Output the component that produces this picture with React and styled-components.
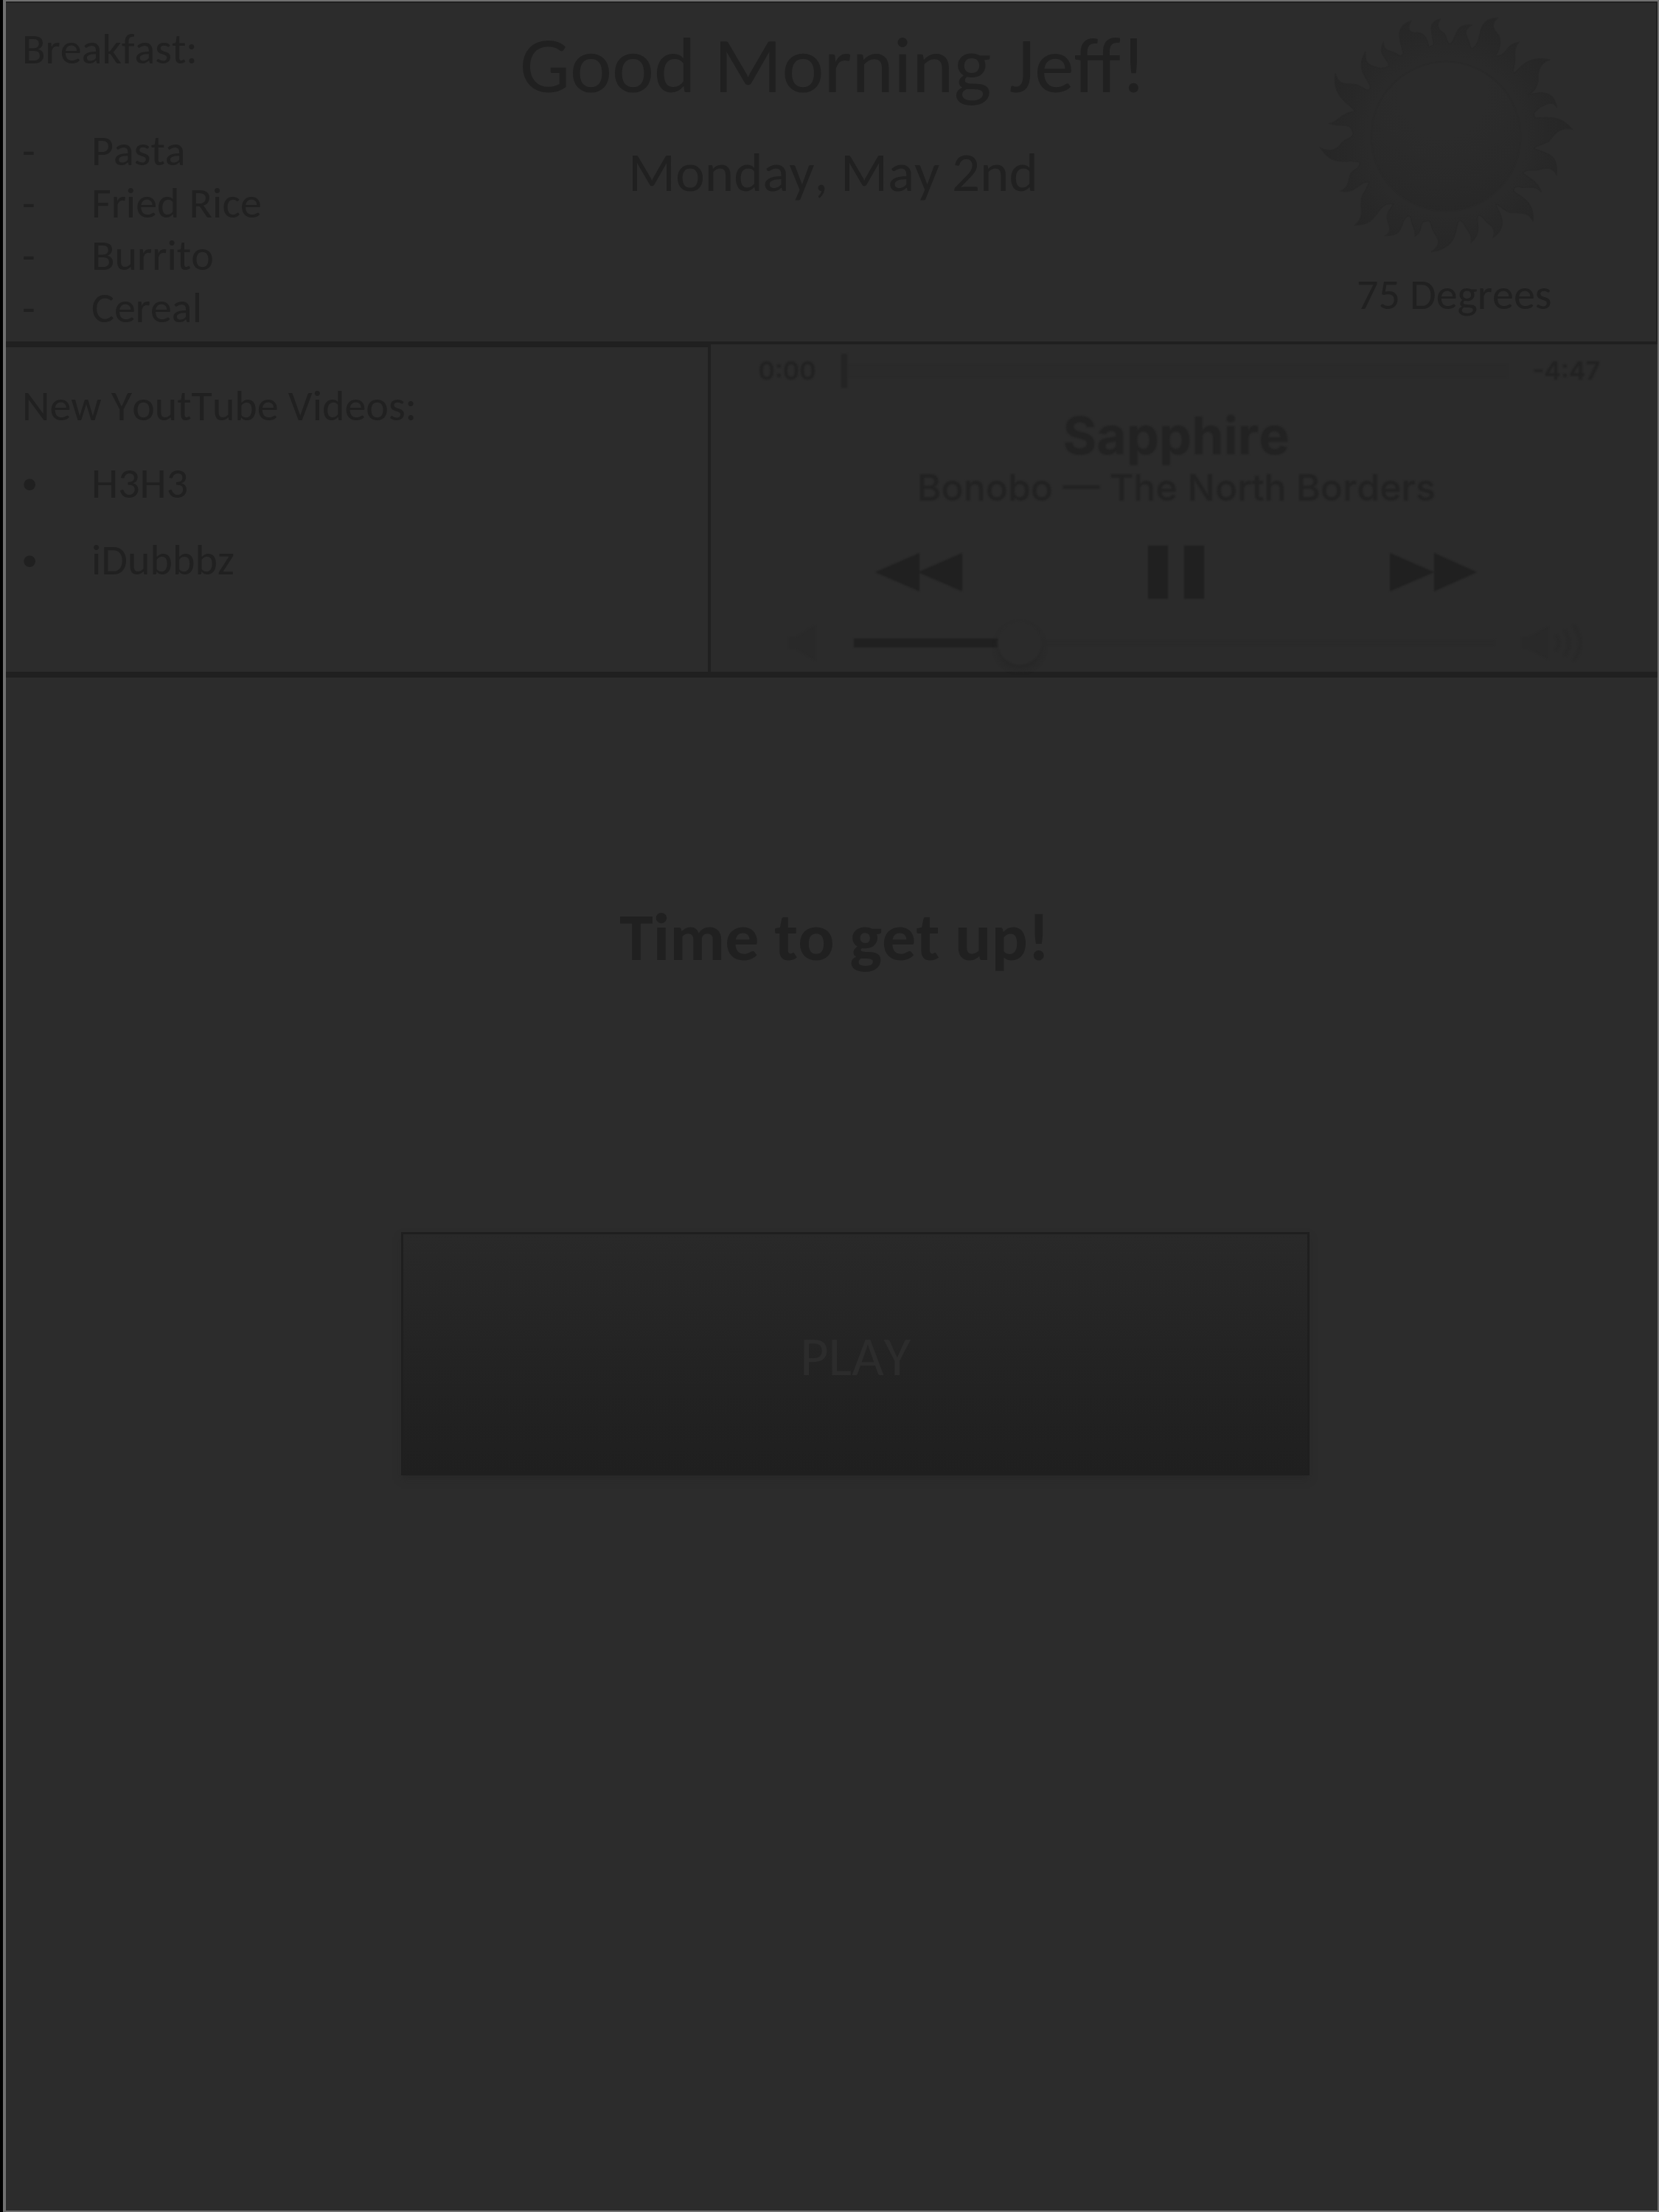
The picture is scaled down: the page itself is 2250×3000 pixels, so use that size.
import React, { useState } from "react";
import styled, { createGlobalStyle } from "styled-components";

const ink = "#202020";
const paper = "#2c2c2c";
const edge = "#707070";

const GlobalStyle = createGlobalStyle`
  *, *::before, *::after { box-sizing: border-box; }
  body { margin: 0; background: #000; }
  h1, h2, p, ul { margin: 0; padding: 0; font-weight: 400; }
`;

const Screen = styled.div`
  display: flex;
  flex-direction: column;
  min-height: 100vh;
  margin-left: 4px;
  border: 2px solid ${edge};
  border-left-width: 4px;
  background: ${paper};
  color: ${ink};
  font-family: Carlito, Calibri, "Open Sans", sans-serif;
  font-size: 58px;
  font-kerning: none;
  line-height: 70px;
`;

const Header = styled.header`
  display: grid;
  grid-template-columns: 1fr 2fr 1fr;
  border: 2px solid ${ink};
  border-width: 2px 2px 4px 0;
`;

const Breakfast = styled.section`
  display: flex;
  flex-direction: column;
  gap: 67px;
  padding: 28px 22px 10px;
`;

const List = styled.ul`
  list-style: none;
`;

const Item = styled.li`
  display: grid;
  grid-template-columns: 94px 1fr;
  line-height: ${(p) => (p.$loose ? "104px" : "71px")};
  white-space: nowrap;
`;

const Bullet = styled.span`
  font-family: "Liberation Sans", sans-serif;
`;

const Greeting = styled.div`
  display: flex;
  flex-direction: column;
  align-items: center;
  gap: 34px;
  padding: 20px 0 0 6px;
  white-space: nowrap;
`;

const Title = styled.h1`
  font-size: 108px;
  line-height: 128px;
`;

const DateLine = styled.p`
  font-size: 75px;
  line-height: 96px;
`;

const Weather = styled.section`
  display: flex;
  flex-direction: column;
  align-items: center;
  gap: 18px;
  padding: 16px 8px 0 0;

  svg { display: block; width: 350px; height: 327px; }
`;

const Degrees = styled.p`
  padding-left: 20px;
`;

const Middle = styled.div`
  display: grid;
  grid-template-columns: 42.7% 1fr;
  border-bottom: 8px solid ${ink};
`;

const Videos = styled.section`
  display: flex;
  flex-direction: column;
  gap: 18px;
  padding: 45px 22px;
  border: solid ${ink};
  border-width: 4px 4px 0 0;
`;

const VideosTitle = styled.h2`
  font-size: 58px;
  line-height: 70px;
`;

const Player = styled.section`
  display: flex;
  flex-direction: column;
  padding: 8px 78px 0 64px;
  background: #2b2b2b;
  color: #222222;
  font-family: Inter, "Liberation Sans", sans-serif;

  & > * { filter: blur(1px); }
`;

const SeekRow = styled.div`
  display: flex;
  align-items: center;
  gap: 34px;
  height: 56px;
  font-size: 34px;
  font-weight: 600;
  line-height: 40px;
`;

const Seek = styled.input`
  appearance: none;
  flex: 1;
  min-width: 0;
  height: 48px;
  margin: 0;
  background: linear-gradient(#2a2a2a, #2a2a2a) center / 100% 18px no-repeat;

  &::-webkit-slider-thumb {
    appearance: none;
    width: 8px;
    height: 46px;
    background: #242424;
  }
`;

const Track = styled.div`
  display: flex;
  flex-direction: column;
  align-items: center;
  padding: 20px 8px 0 0;
  white-space: nowrap;
`;

const Song = styled.h2`
  font-size: 70px;
  font-weight: 700;
  line-height: 80px;
`;

const Artist = styled.p`
  font-size: 50px;
  font-weight: 500;
  line-height: 60px;
`;

const Controls = styled.div`
  display: flex;
  justify-content: space-between;
  align-items: center;
  height: 80px;
  margin-top: 45px;
  padding: 0 167px 0 159px;
`;

const IconButton = styled.button`
  display: flex;
  padding: 0;
  border: 0;
  background: none;
  color: ${ink};
`;

const VolumeRow = styled.div`
  display: flex;
  align-items: center;
  gap: 36px;
  margin-top: 20px;
  padding: 0 18px 3px 42px;
  color: #292929;
`;

const Volume = styled.input`
  appearance: none;
  flex: 1;
  min-width: 0;
  height: 72px;
  margin: 0 0 0 16px;
  border-radius: 6px;
  background:
    linear-gradient(${ink}, ${ink}) left center / 23% 12px no-repeat,
    linear-gradient(#2a2a2a, #2a2a2a) center / 100% 8px no-repeat;

  &::-webkit-slider-thumb {
    appearance: none;
    width: 60px;
    height: 60px;
    border-radius: 50%;
    background: #2b2b2b;
    box-shadow: 0 6px 6px #272727;
  }
`;

const Alarm = styled.main`
  display: flex;
  flex: 1;
  flex-direction: column;
  align-items: center;
  padding: 292px 0 0 8px;
`;

const AlarmText = styled.p`
  font-size: 92px;
  font-weight: 700;
  line-height: 120px;
`;

const PlayButton = styled.button`
  width: 55.2%;
  height: 330px;
  margin-top: 340px;
  margin-left: 56px;
  padding: 8px 0 0;
  border: 3px solid #1f1f1f;
  background: linear-gradient(#292929, #232323 55%, #1f1f1f);
  box-shadow: 0 6px 8px #292929;
  color: #2c2c2c;
  font: inherit;
  font-size: 75px;
`;

const flames =
  "M458 215C450 170 415 110 490 85C468 125 490 135 515 132C550 135 558 165 562 190C570 190 580 185 582 180C580 140 550 90 608 78C590 105 605 125 625 135C640 155 632 175 650 180C680 150 665 95 735 102C705 120 712 140 722 160C730 180 730 195 738 198C790 170 745 75 842 73C810 100 830 125 848 145C862 175 845 210 832 228C885 230 870 180 928 172C905 195 915 230 912 250C910 275 900 290 910 298C945 260 980 225 1055 243C1010 255 1005 300 1008 320C1005 355 985 375 968 385C1010 375 1070 360 1083 437C1065 405 1040 425 1015 435C1000 450 980 455 995 480C1050 475 1100 470 1145 525C1090 515 1070 550 1050 575C1030 590 1000 585 992 605C1050 625 1090 630 1082 710C1060 670 1030 685 1000 692C975 690 950 690 945 705C980 730 1005 740 1020 780C990 750 960 765 940 762C920 755 905 760 908 778C950 810 990 820 987 900C965 855 925 868 895 865C870 860 850 830 835 830C835 850 900 910 825 965C840 920 800 910 790 895C780 880 765 870 762 878C750 905 785 940 735 985C740 950 715 935 708 915C700 900 690 890 680 905C670 950 670 1010 572 1025C610 1000 605 975 590 955C570 930 575 900 562 898C510 900 550 930 507 960C510 925 490 915 490 890C488 875 480 878 475 880C440 900 470 960 387 958C415 940 400 920 393 890C390 860 410 850 418 830C345 815 365 920 262 915C300 885 285 850 288 825C285 790 310 775 320 740C275 735 270 790 205 777C240 760 235 730 245 705C260 685 280 690 282 660C240 640 180 690 122 602C170 625 195 600 210 580C225 560 245 570 255 545C245 490 210 520 160 502C195 495 205 460 262 452C255 430 165 400 182 298C195 355 235 335 270 345C290 350 305 370 318 366C350 340 250 300 305 210C300 260 320 265 355 275C375 280 390 275 400 268C400 240 350 220 378 173C378 210 405 205 425 215C440 225 455 235 458 215Z";

const Sun = () => (
  <svg viewBox="110 60 1050 980" aria-hidden="true">
    <defs>
      <radialGradient id="rays" gradientUnits="userSpaceOnUse" cx="635" cy="555" r="520">
        <stop offset="0.62" stopColor="#2a2a2a" />
        <stop offset="0.78" stopColor="#282828" />
        <stop offset="1" stopColor="#262626" />
      </radialGradient>
      <radialGradient id="disc" cx="0.48" cy="0.2" r="0.85">
        <stop offset="0.35" stopColor="#2b2b2b" />
        <stop offset="0.75" stopColor="#292929" />
        <stop offset="1" stopColor="#272727" />
      </radialGradient>
    </defs>
    <path d={flames} fill="url(#rays)" stroke="#282828" strokeWidth="4" />
    <circle cx="632" cy="555" r="304" fill="url(#disc)" stroke="#292929" strokeWidth="6" />
  </svg>
);

const Rewind = () => (
  <svg width="118" height="52" viewBox="0 0 118 52" fill="currentColor" aria-hidden="true">
    <path d="M0 26L60 0V52ZM58 26L118 0V52Z" />
  </svg>
);

const Forward = () => (
  <svg width="118" height="52" viewBox="0 0 118 52" fill="currentColor" aria-hidden="true">
    <path d="M0 0L60 26L0 52ZM60 0L118 26L60 52Z" />
  </svg>
);

const Pause = () => (
  <svg width="76" height="72" viewBox="0 0 76 72" fill="currentColor" aria-hidden="true">
    <path d="M0 0H27V72H0ZM49 0H76V72H49Z" />
  </svg>
);

const SpeakerLow = () => (
  <svg width="36" height="48" viewBox="0 0 36 48" fill="currentColor" aria-hidden="true">
    <path d="M0 16H10L36 0V48L10 32H0Z" />
  </svg>
);

const SpeakerHigh = () => (
  <svg width="88" height="52" viewBox="0 0 88 52" fill="currentColor" aria-hidden="true">
    <path d="M0 18H10L36 4V48L10 34H0Z" />
    <path d="M46 16Q54 26 46 36M58 9Q70 26 58 43M70 2Q88 26 70 50" fill="none" stroke="currentColor" strokeWidth="4" />
  </svg>
);

const meals = ["Pasta", "Fried Rice", "Burrito", "Cereal"];
const channels = ["H3H3", "iDubbbz"];

export default function App() {
  const [position, setPosition] = useState(0);
  const [volume, setVolume] = useState(24);

  return (
    <>
      <GlobalStyle />
      <Screen>
        <Header>
          <Breakfast>
            <p>Breakfast:</p>
            <List>
              {meals.map((meal) => (
                <Item key={meal}>
                  <span>-</span>
                  <span>{meal}</span>
                </Item>
              ))}
            </List>
          </Breakfast>
          <Greeting>
            <Title>Good Morning Jeff!</Title>
            <DateLine>Monday, May 2nd</DateLine>
          </Greeting>
          <Weather>
            <Sun />
            <Degrees>75 Degrees</Degrees>
          </Weather>
        </Header>
        <Middle>
          <Videos>
            <VideosTitle>New YoutTube Videos:</VideosTitle>
            <List>
              {channels.map((channel) => (
                <Item key={channel} $loose>
                  <Bullet>•</Bullet>
                  <span>{channel}</span>
                </Item>
              ))}
            </List>
          </Videos>
          <Player>
            <SeekRow>
              <span>0:00</span>
              <Seek
                type="range"
                aria-label="Position"
                value={position}
                onChange={(e) => setPosition(Number(e.target.value))}
              />
              <span>-4:47</span>
            </SeekRow>
            <Track>
              <Song>Sapphire</Song>
              <Artist>Bonobo — The North Borders</Artist>
            </Track>
            <Controls>
              <IconButton aria-label="Previous"><Rewind /></IconButton>
              <IconButton aria-label="Pause"><Pause /></IconButton>
              <IconButton aria-label="Next"><Forward /></IconButton>
            </Controls>
            <VolumeRow>
              <SpeakerLow />
              <Volume
                type="range"
                aria-label="Volume"
                value={volume}
                onChange={(e) => setVolume(Number(e.target.value))}
              />
              <SpeakerHigh />
            </VolumeRow>
          </Player>
        </Middle>
        <Alarm>
          <AlarmText>Time to get up!</AlarmText>
          <PlayButton>PLAY</PlayButton>
        </Alarm>
      </Screen>
    </>
  );
}
